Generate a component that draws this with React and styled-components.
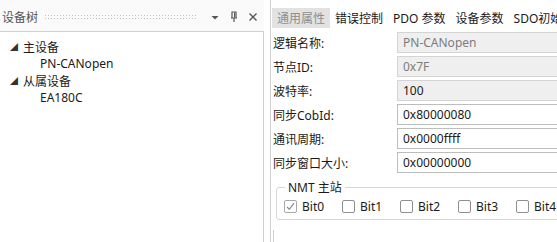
import React from "react";
import styled, { createGlobalStyle } from "styled-components";

const Global = createGlobalStyle`
  html, body { margin: 0; padding: 0; background: #ffffff; }
  body { font-family: "Noto Sans", "Noto Sans CJK SC", sans-serif; font-size: 12px; color: #1a1a1a; }
`;

const Window = styled.div`
  width: 557px;
  height: 242px;
  display: flex;
  overflow: hidden;
  background: #ffffff;
`;

const LeftPane = styled.div`
  width: 264px;
  display: flex;
  flex-direction: column;
  flex-shrink: 0;
`;

const PaneHeader = styled.div`
  height: 31px;
  display: flex;
  align-items: center;
  padding: 2px 4px 0 2px;
  box-sizing: border-box;
  gap: 4px;
  color: #444;
  background: #fafafa;
`;

const Title = styled.span`
  color: #555;
`;

const Grip = styled.div`
  flex: 1;
  height: 5px;
  margin: 0 6px 0 2px;
  background-image: radial-gradient(circle, #c0c0c0 0.75px, transparent 0.85px);
  background-size: 3px 3px;
`;

const HeaderIcon = styled.span`
  width: 14px;
  height: 14px;
  display: flex;
  align-items: center;
  justify-content: center;
  margin-left: ${(p) => p.$ml || 0}px;
`;

const TreeBox = styled.div`
  flex: 1;
  border-top: 1px solid #cfcfcf;
  border-right: 1px solid #cfcfcf;
  background: #fff;
  padding-top: 6px;
`;

const TreeRow = styled.div`
  height: 17px;
  display: flex;
  align-items: center;
  padding-left: ${(p) => (p.$child ? 40 : 10)}px;
`;

const Toggle = styled.span`
  width: 13px;
  font-size: 8px;
  color: #333;
  display: inline-block;
`;

const Splitter = styled.div`
  width: 6px;
  flex-shrink: 0;
`;

const RightPane = styled.div`
  flex: 1;
  display: flex;
  flex-direction: column;
  border-left: 1px solid #d2d2d2;
  overflow: hidden;
  min-width: 0;
`;

const TabBar = styled.div`
  margin-top: 8px;
  height: 20px;
  display: flex;
  padding-left: 1px;
  white-space: nowrap;
`;

const Tab = styled.div`
  padding: 0 5px;
  display: flex;
  align-items: center;
  background: ${(p) => (p.$active ? "#e2e2e2" : "transparent")};
  color: ${(p) => (p.$active ? "#8e8e8e" : "#1a1a1a")};
`;

const Form = styled.div`
  padding: 4px 0 0 2px;
  display: flex;
  flex-direction: column;
  gap: 3px;
`;

const Row = styled.div`
  height: 21px;
  display: flex;
  align-items: center;
`;

const Label = styled.span`
  width: 124px;
  flex-shrink: 0;
`;

const Field = styled.div`
  width: 300px;
  height: 21px;
  box-sizing: border-box;
  flex-shrink: 0;
  border: 1px solid ${(p) => (p.$disabled ? "#d4d4d4" : "#bdbdbd")};
  background: ${(p) => (p.$disabled ? "#efefef" : "#ffffff")};
  color: ${(p) => (p.$muted ? "#7c7c7c" : "#1a1a1a")};
  padding-left: 5px;
  display: flex;
  align-items: center;
`;

const Group = styled.fieldset`
  margin: 5px 0 0 5px;
  padding: 2px 0 5px 7px;
  border: 1px solid #d6d6d6;
  border-radius: 3px;
  width: 320px;
  box-sizing: border-box;
`;

const Legend = styled.legend`
  padding: 0 3px;
  margin-left: 1px;
`;

const Checks = styled.div`
  display: flex;
  white-space: nowrap;
`;

const CheckItem = styled.label`
  width: 58px;
  flex-shrink: 0;
  display: flex;
  align-items: center;
  gap: 5px;
  height: 16px;
`;

const Box = styled.span`
  width: 13px;
  height: 13px;
  box-sizing: border-box;
  border: 1px solid ${(p) => (p.$checked ? "#a8a8a8" : "#8f8f8f")};
  border-radius: 2px;
  background: #fff;
  display: flex;
  align-items: center;
  justify-content: center;
`;

const BottomLine = styled.div`
  margin: 10px 0 0 2px;
  width: 1px;
  flex: 1;
  background: #d0d0d0;
`;

const PinIcon = () => (
  <svg width="10" height="12" viewBox="0 0 10 12">
    <path d="M3 1h4v6H3z M2 7h6 M5 7v4" fill="none" stroke="#555" strokeWidth="1.2" />
    <path d="M5.5 1.5v5" stroke="#555" strokeWidth="1" />
  </svg>
);

const CloseIcon = () => (
  <svg width="10" height="10" viewBox="0 0 10 10">
    <path d="M1.5 1.5l7 7M8.5 1.5l-7 7" stroke="#555" strokeWidth="1.4" />
  </svg>
);

const DownIcon = () => (
  <svg width="8" height="6" viewBox="0 0 8 6">
    <path d="M0.5 2h7L4 5.5z" fill="#555" />
  </svg>
);

const Check = () => (
  <svg width="11" height="11" viewBox="0 0 11 11">
    <path d="M2 5.8l2.3 2.5L9 2.2" fill="none" stroke="#8a8a8a" strokeWidth="1.2" />
  </svg>
);

const fields = [
  { label: "逻辑名称:", value: "PN-CANopen", disabled: true, muted: true },
  { label: "节点ID:", value: "0x7F", disabled: true, muted: true },
  { label: "波特率:", value: "100", disabled: true },
  { label: "同步CobId:", value: "0x80000080" },
  { label: "通讯周期:", value: "0x0000ffff" },
  { label: "同步窗口大小:", value: "0x00000000" },
];

const tabs = ["通用属性", "错误控制", "PDO 参数", "设备参数", "SDO初始化"];
const bits = ["Bit0", "Bit1", "Bit2", "Bit3", "Bit4", "Bit5"];

export default function App() {
  return (
    <>
      <Global />
      <Window>
        <LeftPane>
          <PaneHeader>
            <Title>设备树</Title>
            <Grip />
            <HeaderIcon><DownIcon /></HeaderIcon>
            <HeaderIcon $ml={1}><PinIcon /></HeaderIcon>
            <HeaderIcon $ml={1}><CloseIcon /></HeaderIcon>
          </PaneHeader>
          <TreeBox>
            <TreeRow><Toggle>◢</Toggle>主设备</TreeRow>
            <TreeRow $child>PN-CANopen</TreeRow>
            <TreeRow><Toggle>◢</Toggle>从属设备</TreeRow>
            <TreeRow $child>EA180C</TreeRow>
          </TreeBox>
        </LeftPane>
        <Splitter />
        <RightPane>
          <TabBar>
            {tabs.map((t, i) => (
              <Tab key={t} $active={i === 0}>{t}</Tab>
            ))}
          </TabBar>
          <Form>
            {fields.map((f) => (
              <Row key={f.label}>
                <Label>{f.label}</Label>
                <Field $disabled={f.disabled} $muted={f.muted}>{f.value}</Field>
              </Row>
            ))}
          </Form>
          <Group>
            <Legend>NMT 主站</Legend>
            <Checks>
              {bits.map((b, i) => (
                <CheckItem key={b}>
                  <Box $checked={i === 0}>{i === 0 && <Check />}</Box>
                  {b}
                </CheckItem>
              ))}
            </Checks>
          </Group>
          <BottomLine />
        </RightPane>
      </Window>
    </>
  );
}
